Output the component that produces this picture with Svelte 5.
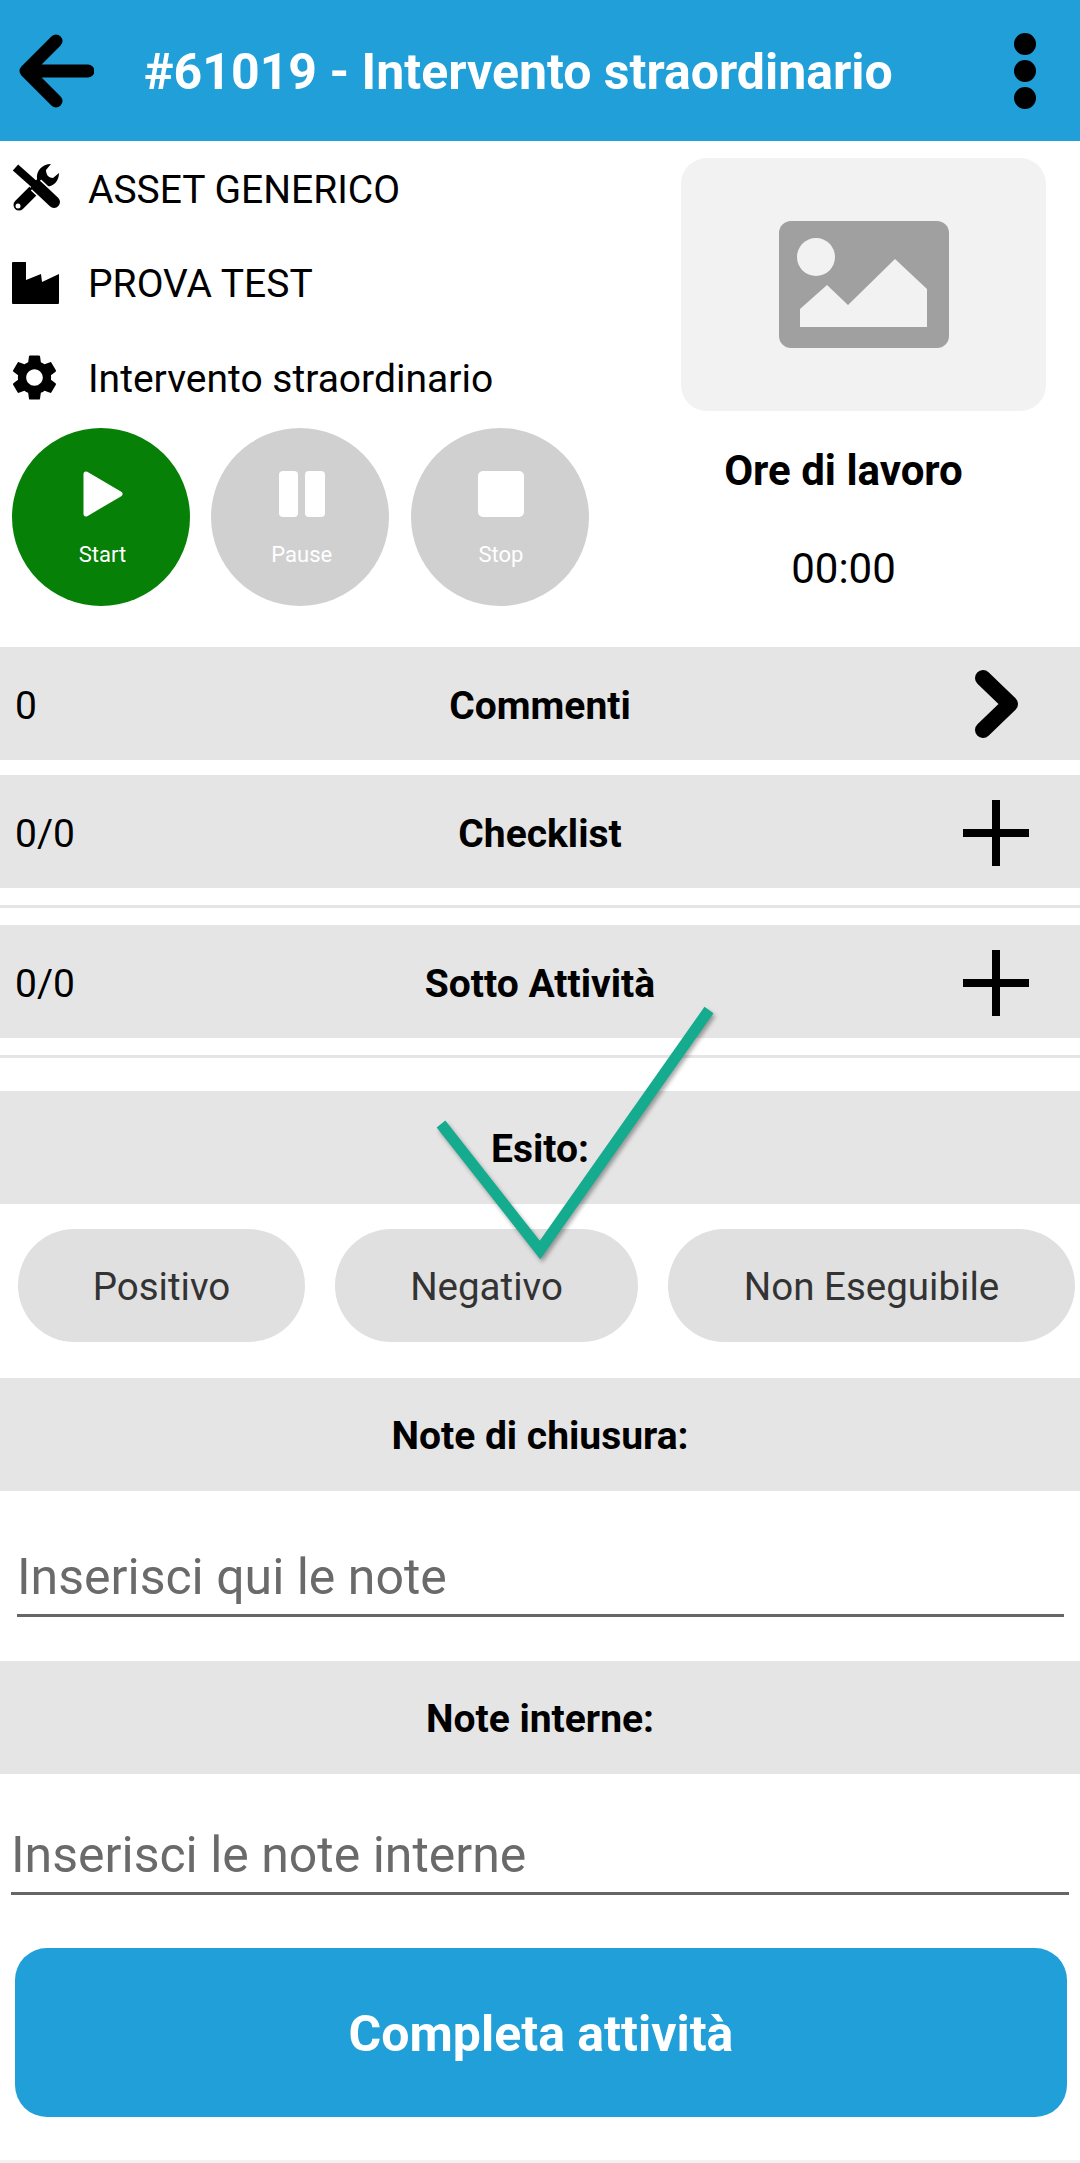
<script>
  const info = [
    { id: 'tools', label: 'ASSET GENERICO' },
    { id: 'factory', label: 'PROVA TEST' },
    { id: 'gear', label: 'Intervento straordinario' }
  ];
  const esiti = ['Positivo', 'Negativo', 'Non Eseguibile'];
</script>

<div class="page">
  <header class="topbar">
    <svg class="back" viewBox="0 0 76 76" width="76" height="76">
      <path d="M70 38H9M38 8L8 38L38 68" fill="none" stroke="#000" stroke-width="13" stroke-linecap="round" stroke-linejoin="round" />
    </svg>
    <h1>#61019 - Intervento straordinario</h1>
    <svg class="more" viewBox="0 0 24 76" width="24" height="76">
      <circle cx="12" cy="11" r="11" />
      <circle cx="12" cy="38" r="11" />
      <circle cx="12" cy="65" r="11" />
    </svg>
  </header>

  <section class="summary">
    <div class="left">
      {#each info as row}
        <div class="info">
          <span class="ico">
            {#if row.id === 'tools'}
              <svg viewBox="0 0 48 48" width="48" height="48">
                <path d="M7 41L25 23" stroke="#000" stroke-width="11" stroke-linecap="round" />
                <path d="M39 0C30 0 24 7 25 15L22 19L28 25L32 22C40 24 47 18 47 9L41 14C37 14 34 11 34 6Z" />
                <path d="M4 4L22 20" stroke="#fff" stroke-width="10" />
                <path d="M24 21L42 38" stroke="#fff" stroke-width="15" />
                <path d="M3.500 3.500L22 20" stroke="#000" stroke-width="8" />
                <path d="M25 22L42 38" stroke="#000" stroke-width="12" stroke-linecap="round" />
                <circle cx="6" cy="42" r="2.500" fill="#fff" />
              </svg>
            {:else if row.id === 'factory'}
              <svg viewBox="0 0 48 42" width="48" height="42">
                <path d="M0 1Q0 0 1 0H14V18L29 12L30 20L47 12V41Q47 42 46 42H1Q0 42 0 41Z" />
              </svg>
            {:else}
              <svg viewBox="2.400 1.800 19.200 20.400" width="45" height="47">
                <path d="M19.140 12.940c.04-.3.06-.61.06-.94 0-.32-.02-.64-.07-.94l2.030-1.580c.18-.14.23-.41.12-.61l-1.920-3.320c-.12-.22-.37-.29-.59-.22l-2.390.96c-.5-.38-1.030-.7-1.620-.94l-.36-2.540c-.04-.24-.24-.41-.48-.41h-3.840c-.24 0-.43.17-.47.41l-.36 2.540c-.59.24-1.130.57-1.620.94l-2.390-.96c-.22-.08-.47 0-.59.22L2.740 8.870c-.12.21-.08.47.12.61l2.030 1.580c-.05.3-.09.63-.09.94s.02.64.07.94l-2.030 1.580c-.18.14-.23.41-.12.61l1.920 3.320c.12.22.37.29.59.22l2.390-.96c.5.38 1.030.7 1.620.94l.36 2.540c.05.24.24.41.48.41h3.840c.24 0 .44-.17.47-.41l.36-2.540c.59-.24 1.130-.56 1.620-.94l2.390.96c.22.08.47 0 .59-.22l1.920-3.320c.12-.22.07-.47-.12-.61l-2.010-1.580zM12 15.600c-1.980 0-3.600-1.620-3.600-3.600s1.620-3.600 3.600-3.600 3.600 1.620 3.600 3.600-1.620 3.600-3.600 3.600z" />
              </svg>
            {/if}
          </span>
          <span class="info-text">{row.label}</span>
        </div>
      {/each}

      <div class="timers">
        <button class="round start">
          <svg viewBox="0 0 40 46" width="40" height="46"><path d="M3 3L37 23L3 43Z" fill="#fff" stroke="#fff" stroke-width="5" stroke-linejoin="round" /></svg>
          <span>Start</span>
        </button>
        <button class="round">
          <svg viewBox="0 0 46 46" width="46" height="46"><rect width="19" height="46" rx="4" fill="#fff" /><rect x="26" width="20" height="46" rx="4" fill="#fff" /></svg>
          <span>Pause</span>
        </button>
        <button class="round">
          <svg viewBox="0 0 46 46" width="46" height="46"><rect width="46" height="46" rx="5" fill="#fff" /></svg>
          <span>Stop</span>
        </button>
      </div>
    </div>

    <div class="right">
      <div class="photo">
        <svg viewBox="0 0 170 127" width="170" height="127">
          <rect width="170" height="127" rx="12" fill="#a0a0a0" />
          <circle cx="37" cy="36" r="19" fill="#f2f2f2" />
          <path d="M21 88L48 64L69 84L116 38L148 68V106H21Z" fill="#f2f2f2" />
        </svg>
      </div>
      <div class="hours-title">Ore di lavoro</div>
      <div class="hours">00:00</div>
    </div>
  </section>

  <div class="band first">
    <span class="count">0</span>
    <b>Commenti</b>
    <svg class="side chevron" viewBox="0 0 44 68" width="44" height="68">
      <path d="M8 8L35 34L8 60" fill="none" stroke="#000" stroke-width="16" stroke-linecap="round" stroke-linejoin="round" />
    </svg>
  </div>

  <div class="band">
    <span class="count">0/0</span>
    <b>Checklist</b>
    <svg class="side" viewBox="0 0 66 66" width="66" height="66"><path d="M33 0V66M0 33H66" stroke="#000" stroke-width="8" /></svg>
  </div>
  <hr />

  <div class="band tight">
    <span class="count">0/0</span>
    <b>Sotto Attività</b>
    <svg class="side" viewBox="0 0 66 66" width="66" height="66"><path d="M33 0V66M0 33H66" stroke="#000" stroke-width="8" /></svg>
  </div>
  <hr />

  <div class="band plain esito"><b>Esito:</b></div>

  <div class="pills">
    {#each esiti as e}
      <button class="pill">{e}</button>
    {/each}
  </div>

  <div class="band plain closing"><b>Note di chiusura:</b></div>
  <div class="field one"><input placeholder="Inserisci qui le note" /></div>

  <div class="band plain internal"><b>Note interne:</b></div>
  <div class="field two"><input placeholder="Inserisci le note interne" /></div>

  <button class="complete">Completa attività</button>

  <div class="navstrip"></div>

  <!-- annotation drawn over the screenshot -->
  <svg class="mark" viewBox="0 0 1080 2163" width="1080" height="2163">
    <path d="M709 1010L540 1250L441 1124" fill="none" stroke="#14ab8e" stroke-width="11" stroke-linejoin="miter" />
  </svg>
</div>

<style>
  :global(body) {
    margin: 0;
    background: #fff;
  }

  .page {
    position: relative;
    width: 1080px;
    height: 2163px;
    overflow: hidden;
    font-family: Roboto, "Liberation Sans", sans-serif;
    color: #000;
  }

  .topbar {
    height: 141px;
    background: #209fd8;
    display: flex;
    align-items: center;
    padding: 0 43px 0 18px;
    box-sizing: border-box;
  }

  .topbar h1 {
    margin: 2px 0 0 50px;
    flex: 1;
    color: #fff;
    font-size: 50px;
    font-weight: 700;
    white-space: nowrap;
  }

  .summary {
    display: flex;
    height: 506px;
  }

  .left {
    width: 681px;
    padding-left: 12px;
    box-sizing: border-box;
  }

  .info {
    height: 94.500px;
    display: flex;
    align-items: center;
    font-size: 39px;
  }

  .info-text {
    padding-top: 3px;
  }

  .ico {
    width: 76px;
    display: flex;
    align-items: center;
  }

  .timers {
    display: flex;
    gap: 21.250px;
    margin-top: 3px;
  }

  .round {
    width: 178px;
    height: 178px;
    border: none;
    border-radius: 50%;
    background: #d0d0d0;
    padding: 43px 0 0 3px;
    display: flex;
    flex-direction: column;
    align-items: center;
    font-family: inherit;
    font-size: 22px;
    color: #fff;
  }

  .round span {
    margin-top: 25px;
  }

  .start {
    background: #078007;
  }

  .right {
    width: 365px;
    padding-top: 17px;
    text-align: center;
  }

  .photo {
    height: 253px;
    border-radius: 26px;
    background: #f2f2f2;
    display: flex;
    align-items: center;
    justify-content: center;
  }

  .hours-title {
    margin-top: 35px;
    font-size: 42px;
    font-weight: 700;
    line-height: 50px;
    margin-right: 40px;
  }

  .hours {
    margin-top: 48px;
    font-size: 42px;
    line-height: 50px;
    margin-right: 40px;
  }

  .band {
    position: relative;
    height: 113px;
    margin-top: 15px;
    padding-top: 4px;
    box-sizing: border-box;
    background: #e5e5e5;
    display: flex;
    align-items: center;
    justify-content: center;
    font-size: 39px;
  }

  .band.plain {
    padding-top: 2px;
  }

  .band.first {
    margin-top: 0;
  }

  .band.tight {
    margin-top: 17px;
  }

  .count {
    position: absolute;
    left: 15px;
  }

  .side {
    position: absolute;
    left: 963px;
    top: 25px;
  }

  .chevron {
    left: 975px;
    top: 23px;
  }

  hr {
    height: 3px;
    margin: 17px 0 0;
    border: none;
    background: #e5e5e5;
  }

  .esito {
    margin-top: 33px;
  }

  .pills {
    display: flex;
    padding: 25px 5px 0 18px;
    gap: 30px;
  }

  .pill {
    height: 113px;
    width: 287px;
    padding: 2px 0 0;
    border: none;
    border-radius: 57px;
    background: #e0e0e0;
    color: #333;
    font-family: inherit;
    font-size: 38.500px;
  }

  .pill:nth-child(2) {
    width: 303px;
  }

  .pill:nth-child(3) {
    width: 407px;
  }

  .closing {
    margin-top: 36px;
  }

  .field {
    height: 126px;
    padding: 0 16px 0 17px;
    display: flex;
    align-items: flex-end;
  }

  .field.two {
    padding: 0 11px;
    height: 121px;
  }

  .field input {
    width: 100%;
    height: 74px;
    box-sizing: border-box;
    border: none;
    border-bottom: 3px solid #666;
    padding: 0 0 3px;
    outline: none;
    background: none;
    font-family: inherit;
    font-size: 50px;
  }

  .field input::placeholder {
    color: #6a6a6a;
    opacity: 1;
  }

  .internal {
    margin-top: 44px;
  }

  .complete {
    display: block;
    width: 1052px;
    height: 169px;
    margin: 53px 0 0 15px;
    padding: 2px 0 0;
    border: none;
    border-radius: 32px;
    background: #209fd8;
    color: #fff;
    font-family: inherit;
    font-size: 50px;
    font-weight: 700;
  }

  .navstrip {
    height: 3px;
    margin-top: 43px;
    background: #f2f2f2;
  }

  .mark {
    position: absolute;
    left: 0;
    top: 0;
    pointer-events: none;
    filter: drop-shadow(2px 3px 2px rgba(0, 0, 0, 0.35));
  }
</style>
